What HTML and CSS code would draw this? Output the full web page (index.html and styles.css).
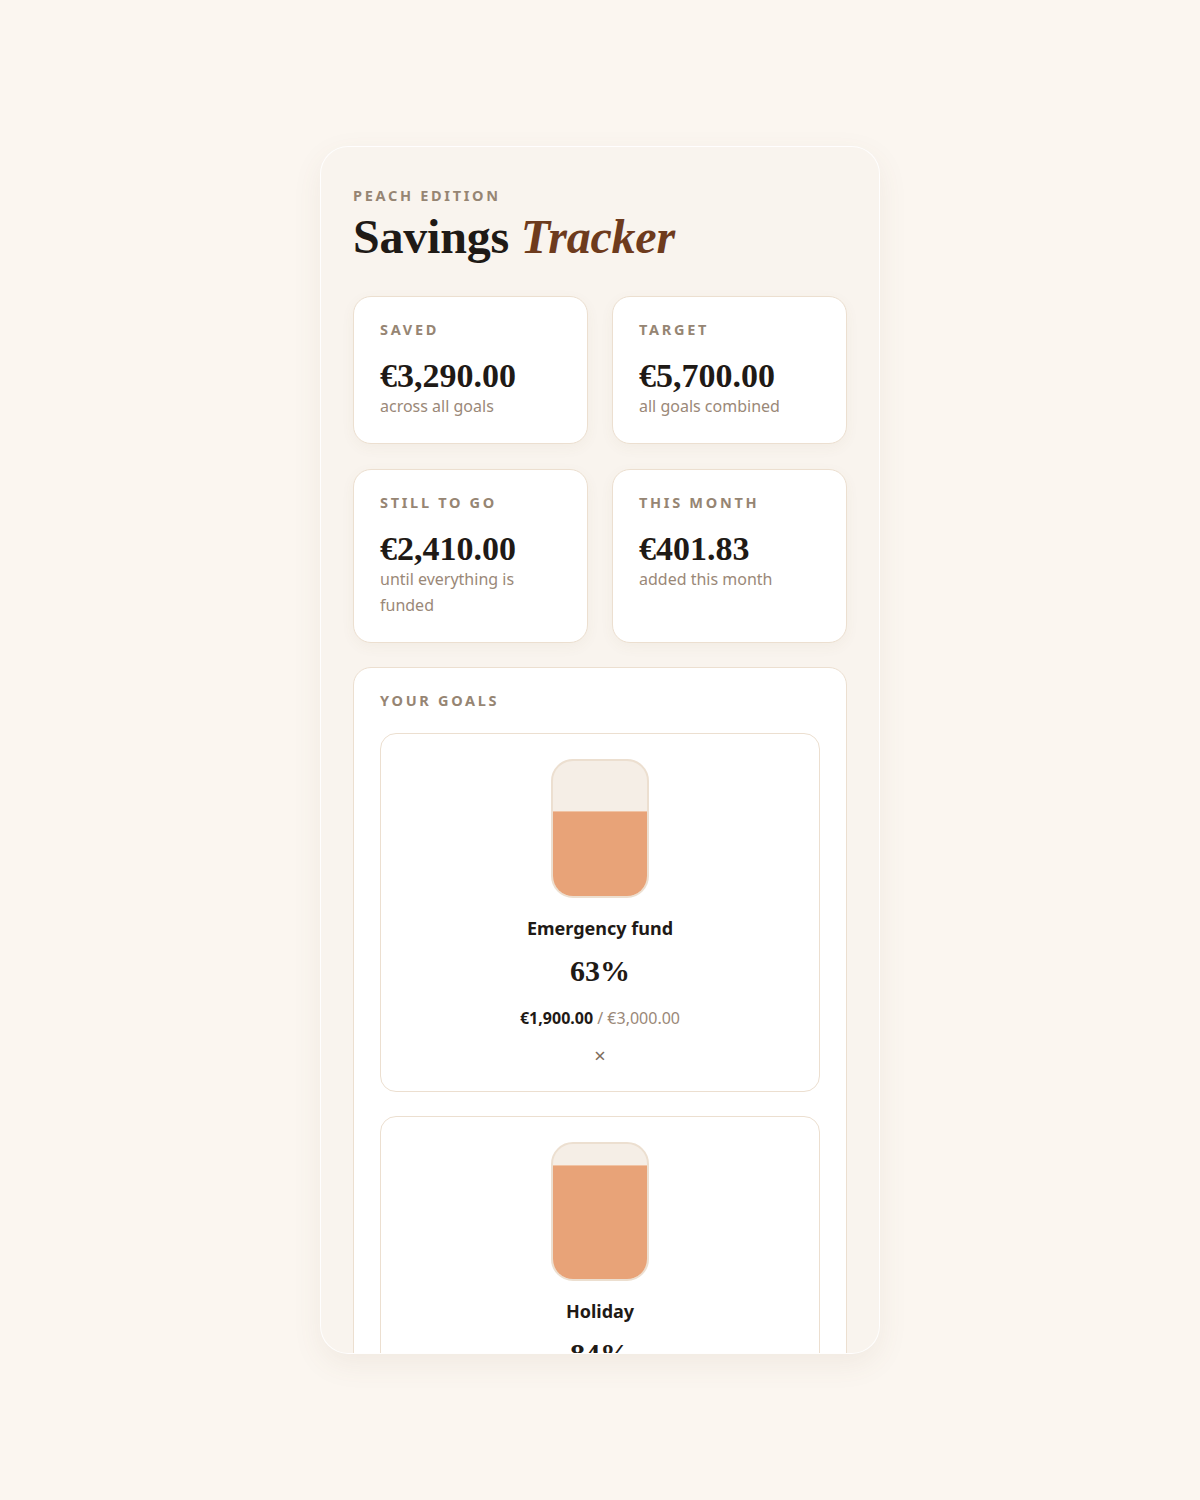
FILE: index.html
```html
<!DOCTYPE html>
<html lang="en">
<head>
  <meta charset="UTF-8" />
  <meta name="viewport" content="width=device-width, initial-scale=1.0" />
  <title>Savings Tracker</title>
  <link rel="stylesheet" href="styles.css">
</head>
<body>
  <div class="app">
    <header class="header">
      <p class="eyebrow">Peach Edition</p>
      <h1 class="title">Savings <em>Tracker</em></h1>
    </header>

    <section class="stats">
      <div class="stat">
        <p class="label">Saved</p>
        <p class="stat-value">€3,290.00</p>
        <p class="stat-sub">across all goals</p>
      </div>
      <div class="stat">
        <p class="label">Target</p>
        <p class="stat-value">€5,700.00</p>
        <p class="stat-sub">all goals combined</p>
      </div>
      <div class="stat">
        <p class="label">Still to go</p>
        <p class="stat-value">€2,410.00</p>
        <p class="stat-sub">until everything is funded</p>
      </div>
      <div class="stat">
        <p class="label">This month</p>
        <p class="stat-value">€401.83</p>
        <p class="stat-sub">added this month</p>
      </div>
    </section>

    <section class="goals">
      <p class="label">Your goals</p>

      <div class="goal">
        <div class="jar">
          <div class="jar-fill" style="height: 63%;"></div>
        </div>
        <p class="goal-name">Emergency fund</p>
        <p class="goal-pct">63%</p>
        <p class="goal-amount"><strong>€1,900.00</strong> / €3,000.00</p>
        <button type="button" class="remove" aria-label="Remove goal">×</button>
      </div>

      <div class="goal">
        <div class="jar">
          <div class="jar-fill" style="height: 84%;"></div>
        </div>
        <p class="goal-name">Holiday</p>
        <p class="goal-pct">84%</p>
        <p class="goal-amount"><strong>€1,390.00</strong> / €1,650.00</p>
        <button type="button" class="remove" aria-label="Remove goal">×</button>
      </div>
    </section>
  </div>
</body>
</html>
```

FILE: styles.css
```css
* {
  box-sizing: border-box;
}
body {
  font-family: "Noto Sans", "Open Sans", sans-serif;
  background-color: #fbf6f0;
  color: #1f1a16;
  margin: 0;
  min-height: 100vh;
  display: flex;
  align-items: center;
  justify-content: center;
}
p {
  margin: 0;
}
.app {
  width: 560px;
  height: 1208px;
  overflow: hidden;
  background-color: #f9f4ee;
  border: 1px solid rgba(255,255,255,0.9);
  border-radius: 28px;
  box-shadow: 0 10px 30px rgba(120,90,60,0.08);
  padding: 38px 32px 0;
}
.header {
  margin-bottom: 32px;
}
.eyebrow {
  font-size: 14.5px;
  font-weight: 700;
  letter-spacing: 2.7px;
  text-transform: uppercase;
  color: #968573;
  line-height: 20px;
}
.title {
  font-family: "Liberation Serif", "DejaVu Serif", serif;
  font-size: 48px;
  font-weight: 700;
  line-height: 1.1;
  margin: 6px 0 0;
  letter-spacing: -0.2px;
}
.title em {
  color: #6e3b1d;
}
.stats {
  display: grid;
  grid-template-columns: 1fr 1fr;
  column-gap: 24px;
  row-gap: 25px;
  margin-bottom: 24px;
}
.stat {
  background-color: #fff;
  border: 1px solid #ecdfd0;
  border-radius: 18px;
  padding: 22px 26px 24px;
  box-shadow: 0 4px 14px rgba(120,90,60,0.05);
}
.label {
  font-size: 14.5px;
  font-weight: 700;
  letter-spacing: 2.7px;
  text-transform: uppercase;
  color: #968573;
  line-height: 20px;
}
.stat-value {
  font-family: "Liberation Serif", "DejaVu Serif", serif;
  font-size: 34px;
  font-weight: 700;
  line-height: 34px;
  margin-top: 20px;
}
.stat-sub {
  font-size: 16px;
  line-height: 26px;
  color: #9a8878;
}
.goals {
  background-color: #fff;
  border: 1px solid #ecdfd0;
  border-radius: 18px;
  padding: 22px 26px 26px;
  display: flex;
  flex-direction: column;
  gap: 24px;
}
.goals .label {
  margin-bottom: -1px;
}
.goal {
  border: 1.5px solid #ecdfd0;
  border-radius: 16px;
  padding: 25px 20px 23px;
  display: flex;
  flex-direction: column;
  align-items: center;
  text-align: center;
}
.jar {
  width: 98px;
  height: 139px;
  border: 2px solid #ecdfd0;
  border-radius: 22px;
  background-color: #f5eee6;
  overflow: hidden;
  display: flex;
  flex-direction: column;
  justify-content: flex-end;
}
.jar-fill {
  background-color: #e8a378;
  border-top: 1px solid #f0c3a4;
}
.goal-name {
  font-size: 18px;
  font-weight: 700;
  line-height: 26px;
  margin-top: 17px;
}
.goal-pct {
  font-family: "Liberation Serif", "DejaVu Serif", serif;
  font-size: 30px;
  font-weight: 700;
  line-height: 40px;
  margin-top: 10px;
}
.goal-amount {
  font-size: 16px;
  line-height: 24px;
  color: #9a8878;
  margin-top: 15px;
}
.goal-amount strong {
  color: #1f1a16;
}
.remove {
  background: none;
  border: none;
  color: #7d6c5c;
  font-family: "Noto Sans", sans-serif;
  font-size: 20px;
  line-height: 24px;
  padding: 0 6px;
  margin-top: 14px;
  cursor: pointer;
}
```
